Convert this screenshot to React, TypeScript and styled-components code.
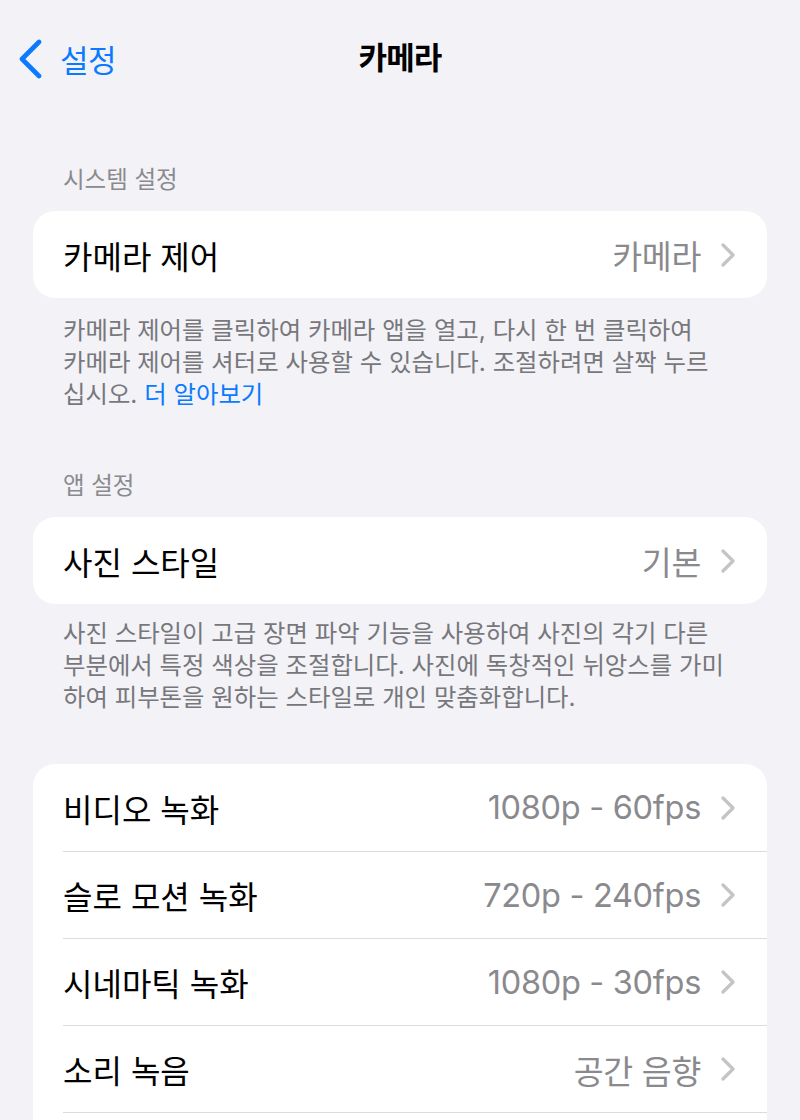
import React from 'react';
import styled, { createGlobalStyle } from 'styled-components';

const GlobalStyle = createGlobalStyle`
  html, body {
    margin: 0;
    padding: 0;
    background: #f2f2f7;
  }
  body {
    font-family: "Inter", "Noto Sans CJK KR", sans-serif;
    -webkit-font-smoothing: antialiased;
  }
`;

const Screen = styled.div`
  width: 800px;
  height: 1120px;
  overflow: hidden;
  background: #f2f2f7;
`;

const NavBar = styled.div`
  position: relative;
  height: 112px;
  display: flex;
  align-items: center;
  justify-content: center;
`;

const BackButton = styled.div`
  position: absolute;
  left: 18px;
  top: 36px;
  display: flex;
  align-items: center;
  gap: 18px;
  color: #0a7aff;
  font-size: 31px;
  letter-spacing: -0.5px;
`;

const Title = styled.div`
  font-size: 31px;
  font-weight: 700;
  color: #000;
  letter-spacing: -0.8px;
  margin-top: -2px;
`;

const Section = styled.section<{ $top: number }>`
  margin-top: ${p => p.$top}px;
`;

const SectionHeader = styled.div`
  padding: 0 63px;
  font-size: 23.5px;
  line-height: 30px;
  color: #8a8a8e;
  margin-bottom: 16px;
`;

const Card = styled.div`
  margin: 0 33px;
  background: #fff;
  border-radius: 22px;
  overflow: hidden;
`;

const Row = styled.div`
  height: 87px;
  display: flex;
  align-items: center;
  padding-left: 30px;
  & + & > div {
    border-top: 1px solid #dcdce0;
  }
`;

const RowInner = styled.div`
  flex: 1;
  height: 100%;
  box-sizing: border-box;
  display: flex;
  align-items: center;
  justify-content: space-between;
  padding-right: 32px;
`;

const Label = styled.span`
  font-size: 32px;
  color: #000;
`;

const Value = styled.span`
  display: flex;
  align-items: center;
  gap: 20px;
  font-size: 32.5px;
  color: #8a8a8e;
  letter-spacing: -0.3px;
`;

const Footer = styled.div<{ $top: number }>`
  padding: ${p => p.$top}px 63px 0;
  font-size: 24.4px;
  line-height: 32px;
  color: #77777c;
`;

const Line = styled.span`
  display: block;
  white-space: nowrap;
`;

const Link = styled.span`
  color: #0a7aff;
`;

const Chevron = () => (
  <svg width="14" height="24" viewBox="0 0 14 24" fill="none">
    <path d="M2 2l10 10L2 22" stroke="#c4c4c7" strokeWidth="3.2" strokeLinecap="round" strokeLinejoin="round" />
  </svg>
);

const BackChevron = () => (
  <svg width="24" height="40" viewBox="0 0 24 40" fill="none">
    <path d="M21 3L4 20l17 17" stroke="#0a7aff" strokeWidth="4.6" strokeLinecap="round" strokeLinejoin="round" />
  </svg>
);

const SettingRow: React.FC<{ label?: string; value?: string }> = ({ label, value }) => (
  <Row>
    <RowInner>
      <Label>{label}</Label>
      {value && (
        <Value>
          {value}
          <Chevron />
        </Value>
      )}
    </RowInner>
  </Row>
);

const recordingRows = [
  { label: '비디오 녹화', value: '1080p - 60fps' },
  { label: '슬로 모션 녹화', value: '720p - 240fps' },
  { label: '시네마틱 녹화', value: '1080p - 30fps' },
  { label: '소리 녹음', value: '공간 음향' },
];

export default function App() {
  return (
    <>
      <GlobalStyle />
      <Screen>
        <NavBar>
          <BackButton>
            <BackChevron />
            <span>설정</span>
          </BackButton>
          <Title>카메라</Title>
        </NavBar>

        <Section $top={53}>
          <SectionHeader>시스템 설정</SectionHeader>
          <Card>
            <SettingRow label="카메라 제어" value="카메라" />
          </Card>
          <Footer $top={16}>
            <Line>카메라 제어를 클릭하여 카메라 앱을 열고, 다시 한 번 클릭하여</Line>
            <Line>카메라 제어를 셔터로 사용할 수 있습니다. 조절하려면 살짝 누르</Line>
            <Line>
              십시오. <Link>더 알아보기</Link>
            </Line>
          </Footer>
        </Section>

        <Section $top={61}>
          <SectionHeader>앱 설정</SectionHeader>
          <Card>
            <SettingRow label="사진 스타일" value="기본" />
          </Card>
          <Footer $top={13}>
            <Line>사진 스타일이 고급 장면 파악 기능을 사용하여 사진의 각기 다른</Line>
            <Line>부분에서 특정 색상을 조절합니다. 사진에 독창적인 뉘앙스를 가미</Line>
            <Line>하여 피부톤을 원하는 스타일로 개인 맞춤화합니다.</Line>
          </Footer>
        </Section>

        <Section $top={51}>
          <Card>
            {recordingRows.map(r => (
              <SettingRow key={r.label} label={r.label} value={r.value} />
            ))}
            {/* next row starts just below the fold */}
            <SettingRow />
          </Card>
        </Section>
      </Screen>
    </>
  );
}
